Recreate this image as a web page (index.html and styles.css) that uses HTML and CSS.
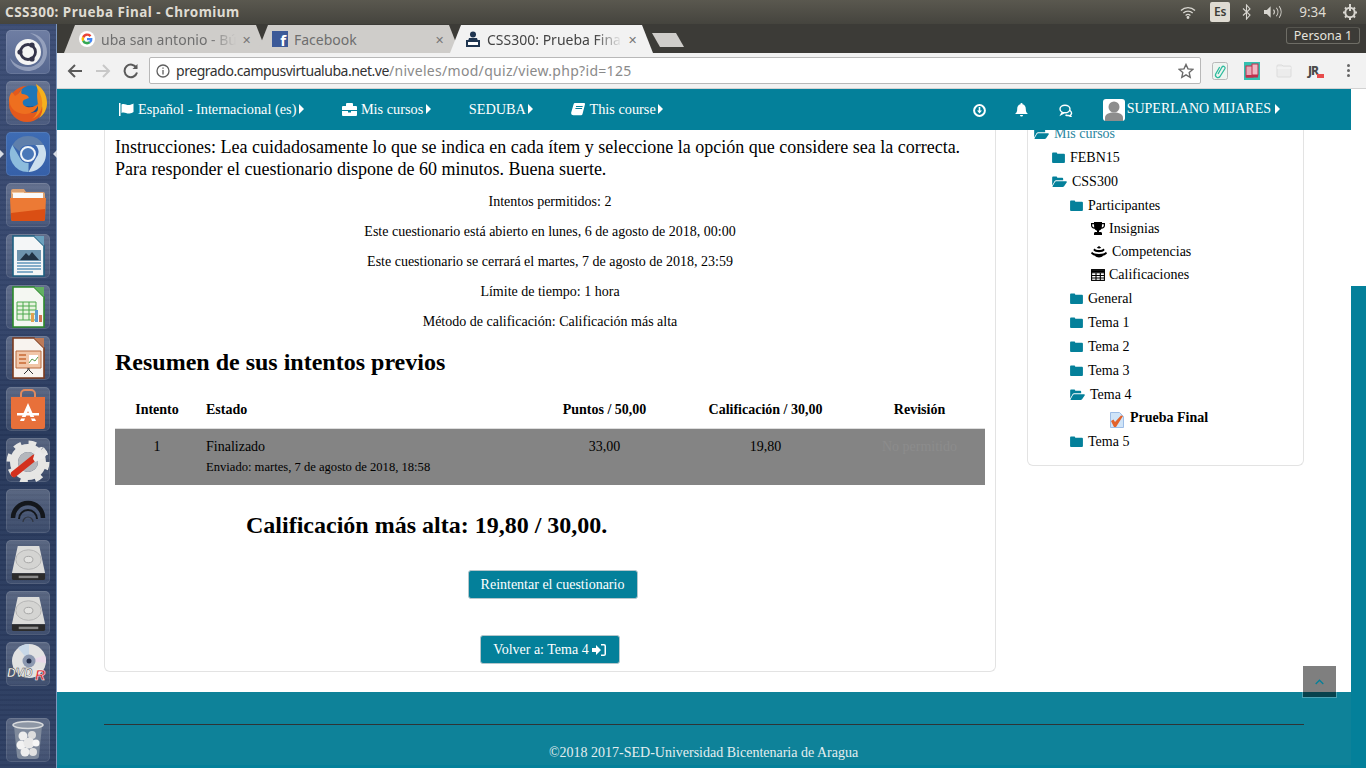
FILE: index.html
```html
<!DOCTYPE html>
<html lang="es">
<head>
<meta charset="utf-8">
<title>CSS300: Prueba Final</title>
<link rel="stylesheet" href="styles.css">
</head>
<body>
<svg class="defs" width="0" height="0" aria-hidden="true">
  <symbol id="folder" viewBox="0 0 14 12"><path d="M1 .5h3.600a1 1 0 0 1 1 1v.4H13a1 1 0 0 1 1 1V11a1 1 0 0 1-1 1H1a1 1 0 0 1-1-1V1.500a1 1 0 0 1 1-1z"/></symbol>
  <symbol id="folder-open" viewBox="0 0 16 12"><path d="M0 10.300V1.500a1 1 0 0 1 1-1h3.500a1 1 0 0 1 1 1v.4H11a1 1 0 0 1 1 1V4.600H4.300a2 2 0 0 0-1.600.9z"/><path d="M4.400 5.600H15a1 1 0 0 1 .8 1.500L13 11.200a2 2 0 0 1-1.600.8H1a.6.6 0 0 1-.4-1L3.200 6.200a1.600 1.600 0 0 1 1.200-.6z"/></symbol>
  <symbol id="disk" viewBox="0 0 44 44"><path d="M11 5h22l6 28H5z" fill="#dcdcda"/><path d="M5 33h34v5a2 2 0 0 1-2 2H7a2 2 0 0 1-2-2z" fill="#2b2b2b"/><path d="M12 35.500h20v2.500H12z" fill="#8a8a8a"/><ellipse cx="22" cy="19" rx="13" ry="10" fill="#d4d4d2" stroke="#b4b4b4"/><ellipse cx="22" cy="19" rx="4.500" ry="3.300" fill="#e2e2e0" stroke="#a4a4a4"/></symbol>
  <symbol id="caret" viewBox="0 0 5 10"><path d="M0 0l5 5-5 5z"/></symbol>
</svg>
<div class="desktop">
  <header class="panel">
    <span class="win-title">CSS300: Prueba Final - Chromium</span>
    <div class="tray">
      <svg class="tray-wifi" width="18" height="13" viewBox="0 0 16 13" fill="none" stroke="#d8d6d0" stroke-width="1.300"><path d="M1 4.500a10 10 0 0 1 14 0M3.300 7a7 7 0 0 1 9.400 0M5.600 9.400a3.600 3.600 0 0 1 4.800 0"/><circle cx="8" cy="11.500" r=".8" fill="#d8d6d0"/></svg>
      <span class="tray-es">Es</span>
      <svg class="tray-bt" width="9" height="16" viewBox="0 0 9 16" fill="none" stroke="#d8d6d0" stroke-width="1.100"><path d="M1 4.500l7 6.500-3.500 4V1L8 5 1 11.500"/></svg>
      <svg class="tray-vol" width="19" height="14" viewBox="0 0 20 14"><path d="M0 5h3l4-4v12l-4-4H0z" fill="#d8d6d0"/><path d="M10 4.500a4 4 0 0 1 0 5M13 2.500a7 7 0 0 1 0 9M16 1a10 10 0 0 1 0 12" fill="none" stroke="#d8d6d0" stroke-width="1.100"/></svg>
      <span class="tray-time">9:34</span>
      <svg width="16" height="16" viewBox="0 0 16 16" fill="none" stroke="#d8d6d0" stroke-width="2"><circle cx="8" cy="8.500" r="4.700"/><path d="M8 0v7M8 13v3M1 8.500h2M13 8.500h2M3 3.500l1.500 1.500M13 3.500L11.500 5M3 13.500L4.500 12M13 13.500L11.500 12"/></svg>
    </div>
  </header>
  <div class="below-panel">
    <nav class="launcher">
      <div class="tile tile-ubuntu">
        <svg width="44" height="44" viewBox="0 0 44 44"><path d="M24 3c10 1 17 9 17 19s-8 19-19 19C14 41 6 36 4 28c4 6 10 9 18 9 9 0 15-7 15-15S33 7 24 3z" fill="#a8b2cb" opacity=".7"/><circle cx="22" cy="22" r="13" fill="#f5f5f5"/><circle cx="22" cy="22" r="7.500" fill="none" stroke="#34344a" stroke-width="2.800"/><circle cx="14" cy="22" r="2.600" fill="#34344a"/><circle cx="26" cy="15" r="2.600" fill="#34344a"/><circle cx="26" cy="29" r="2.600" fill="#34344a"/></svg>
      </div>
      <div class="tile">
        <svg width="40" height="40" viewBox="0 0 40 40"><circle cx="19" cy="21" r="18" fill="#e4591c"/><circle cx="23" cy="16" r="13.500" fill="#1f76b8"/><path d="M23 16m-13 4a13.500 13.500 0 0 0 26 0c-5 4-21 5-26 0z" fill="#164f92"/><path d="M28 1c7 4 11 11 11 19 0 6-3 12-8 15 3-4 4-8 3-12-1-7-4-14-6-22z" fill="#f6b01c"/><path d="M30 6c3 6 5 12 4 18-1 5-5 10-10 12 4-3 6-8 6-12 0-6-2-12 0-18z" fill="#f08a1c"/><path d="M4 9l3 4 3-2 4-5c-1 3-1 4 0 5 3 0 6 1 7 4-2 1-5 1-6 3-1 3 1 5 4 6 5 1 9-1 12-4-2 7-7 11-14 11-8 0-15-5-16-14 0-3 1-6 3-8z" fill="#ee6f1f"/></svg>
      </div>
      <div class="tile tile-active">
        <span class="arrow-left"></span><span class="arrow-right"></span>
        <svg width="38" height="38" viewBox="0 0 38 38"><path d="M19 1a18 18 0 0 1 15.600 9H19a9 9 0 0 0-8.600 6.300L3.400 10A18 18 0 0 1 19 1z" fill="#5f7fab"/><path d="M34.600 10A18 18 0 0 1 19.500 37l7.300-13.500a9 9 0 0 0-.6-13.500z" fill="#cbdfee"/><path d="M3.400 10l7.800 13.500a9 9 0 0 0 8.400 4.500l-.1 9A18 18 0 0 1 3.400 10z" fill="#8dbcdd"/><circle cx="19" cy="19" r="7" fill="#4a78b8" stroke="#eef4f9" stroke-width="2"/></svg>
      </div>
      <div class="tile">
        <svg width="40" height="36" viewBox="0 0 40 36"><path d="M3 4a2 2 0 0 1 2-2h11l2 3h17a2 2 0 0 1 2 2v4H3z" fill="#dba070"/><path d="M4 5h12v2H4z" fill="#f4c9a0"/><path d="M5 6h30v6H5z" fill="#fafafa"/><path d="M2 11h36l-1 21a2 2 0 0 1-2 2H5a2 2 0 0 1-2-2z" fill="#ec7a35"/><path d="M3 26l34-4v10a2 2 0 0 1-2 2H5a2 2 0 0 1-2-2z" fill="#da4f14"/></svg>
      </div>
      <div class="tile">
        <svg width="34" height="42" viewBox="0 0 34 42"><path d="M2 1h21l10 10v30H2z" fill="#f4f6f7" stroke="#1d5f80" stroke-width="1.600"/><path d="M23 1h10v10z" fill="#6aa0bd"/><path d="M6 15h24v11H6z" fill="#6d93ad"/><path d="M9 25l6-7 3 3 3-4 7 8z" fill="#234"/><path d="M6 28h24M6 31h24M6 34h24M6 37h16" stroke="#5f95ba" stroke-width="1.500"/></svg>
      </div>
      <div class="tile">
        <svg width="34" height="42" viewBox="0 0 34 42"><path d="M2 1h21l10 10v30H2z" fill="#f4f7f2" stroke="#2b8a2b" stroke-width="1.600"/><path d="M23 1h10v10z" fill="#62b062"/><path d="M6 16h19v18H6z" fill="#e8f3e0" stroke="#4aa84a"/><path d="M6 20h19M6 24h19M6 28h19M12 16v18M18 16v18" stroke="#4aa84a"/><path d="M20 27h3v9h-3z" fill="#e0a050"/><path d="M24 24h3v12h-3z" fill="#5a9ad0"/><path d="M28 29h3v7h-3z" fill="#d07050"/></svg>
      </div>
      <div class="tile">
        <svg width="34" height="42" viewBox="0 0 34 42"><path d="M2 1h21l10 10v30H2z" fill="#f8f3ef" stroke="#7c3a1d" stroke-width="1.600"/><path d="M23 1h10v10z" fill="#bd7a58"/><path d="M5 14h25v17H5z" fill="#f1c6a8" stroke="#b96a3f"/><path d="M8 18h7M8 22h7M8 26h7" stroke="#c76a33" stroke-width="1.500"/><path d="M18 18h9v9h-9z" fill="#fff"/><path d="M18 26l3-4 3 2 3-4" fill="none" stroke="#5a9a4a"/><path d="M17 31v2l-4 4M18 31v2l4 4" stroke="#333" fill="none"/></svg>
      </div>
      <div class="tile">
        <svg width="38" height="42" viewBox="0 0 38 42"><path d="M12 10V6a4 4 0 0 1 4-4h6a4 4 0 0 1 4 4v4" fill="none" stroke="#e28a5d" stroke-width="2"/><path d="M2 9h34v30a2 2 0 0 1-2 2H4a2 2 0 0 1-2-2z" fill="#e8703a"/><path d="M19 15l8 18h-4l-4-10-4 10h-4z" fill="#fff"/><path d="M8 25h22v2.500H8z" fill="#fff"/><path d="M8 29h22v1.500H8z" fill="#e8703a"/></svg>
      </div>
      <div class="tile">
        <svg width="44" height="44" viewBox="0 0 44 44"><circle cx="22" cy="24" r="14" fill="none" stroke="#e6e6e4" stroke-width="8"/><circle cx="22" cy="24" r="19" fill="none" stroke="#e6e6e4" stroke-width="5" stroke-dasharray="7.500 7.420"/><circle cx="22" cy="24" r="10" fill="#b4b7bc"/><path d="M8 36L28 20" stroke="#d3301e" stroke-width="6.500" stroke-linecap="round"/><path d="M27 21l2-7c1-3 4-5 8-5l-3 4 3 3 4-3c0 4-2 7-5 8l-7 3z" fill="#eaeaea"/></svg>
      </div>
      <div class="tile">
        <svg width="36" height="30" viewBox="0 0 36 30" fill="none" stroke="#14171c"><path d="M3 22a15 15 0 0 1 30 0" stroke-width="4.500"/><path d="M9 23a9 9 0 0 1 18 0" stroke-width="2"/><path d="M13 26a5 5 0 0 1 10 0" stroke-width="1.200" stroke="#303540"/></svg>
      </div>
      <div class="tile"><svg width="43" height="43"><use href="#disk"/></svg></div>
      <div class="tile"><svg width="43" height="43"><use href="#disk"/></svg></div>
      <div class="tile">
        <svg width="44" height="44" viewBox="0 0 44 44"><circle cx="23" cy="19" r="17" fill="#e2e2e2"/><path d="M23 19L12 6a17 17 0 0 1 11-4z" fill="#c8d8e8"/><path d="M23 19l16-6a17 17 0 0 1 1 8z" fill="#e8d8e8"/><circle cx="23" cy="19" r="6.500" fill="#8c98b0"/><circle cx="23" cy="19" r="2.500" fill="#25304c"/><text x="1" y="35" class="dvd">DVD</text><text x="29" y="38" class="dvd-r">R</text></svg>
      </div>
      <div class="tile tile-trash">
        <svg width="34" height="42" viewBox="0 0 34 42"><path d="M3 7l3 30a4 3 0 0 0 4 3h14a4 3 0 0 0 4-3l3-30z" fill="#7f8a9c"/><ellipse cx="17" cy="6" rx="15" ry="3.500" fill="#8e97a5" stroke="#dadcde" stroke-width="1.500"/><circle cx="12" cy="17" r="4.500" fill="#eee"/><circle cx="21" cy="16" r="4" fill="#ddd"/><circle cx="10" cy="26" r="4.500" fill="#f2f2f2"/><circle cx="18" cy="24" r="5.500" fill="#e8e8e8"/><circle cx="25" cy="24" r="3.500" fill="#f6f6f6"/><circle cx="14" cy="33" r="4.500" fill="#eee"/><circle cx="22" cy="33" r="4" fill="#e2e2e2"/></svg>
      </div>
    </nav>
    <div class="browser">
      <div class="tabstrip">
        <div class="tab">
          <svg class="fav" width="16" height="16" viewBox="0 0 16 16"><circle cx="8" cy="8" r="8" fill="#fff"/><path d="M12.400 4.500A5.500 5.500 0 0 0 3.100 5.500L5.200 7.200A3 3 0 0 1 10.500 6z" fill="#ea4335"/><path d="M3.100 5.500a5.500 5.500 0 0 0 0 5l2.100-1.600a3 3 0 0 1 0-1.700z" fill="#fbbc05"/><path d="M3.100 10.500a5.500 5.500 0 0 0 8.600 1.400l-2-1.600A3 3 0 0 1 5.200 8.900z" fill="#34a853"/><path d="M8 7v2.200h3a3 3 0 0 1-1.300 1.100l2 1.600A5.500 5.500 0 0 0 13.400 7z" fill="#4285f4"/></svg>
          <span class="tab-title">uba san antonio - Bú</span><span class="tab-x">✕</span>
        </div>
        <div class="tab">
          <span class="fav fav-fb">f</span>
          <span class="tab-title tab-plain">Facebook</span><span class="tab-x">✕</span>
        </div>
        <div class="tab tab-active">
          <svg class="fav" width="16" height="16" viewBox="0 0 16 16" fill="#1f3550"><circle cx="8" cy="3.500" r="3"/><path d="M4 7h8l1 3H3z"/><path d="M1 9h14v7H1z"/><path d="M3 11h10v3H3z" fill="#fff"/></svg>
          <span class="tab-title">CSS300: Prueba Fina</span><span class="tab-x">✕</span>
        </div>
        <div class="newtab"></div>
        <span class="persona">Persona 1</span>
      </div>
      <div class="toolbar">
        <svg class="tool" width="16" height="16" viewBox="0 0 16 16" fill="none" stroke="#5a5a5a" stroke-width="2"><path d="M15 8H2M8 2L2 8l6 6"/></svg>
        <svg class="tool" width="16" height="16" viewBox="0 0 16 16" fill="none" stroke="#c8c8c8" stroke-width="2"><path d="M1 8h13M8 2l6 6-6 6"/></svg>
        <svg class="tool" width="16" height="16" viewBox="0 0 16 16" fill="none" stroke="#5a5a5a" stroke-width="2"><path d="M13.500 5A6.300 6.300 0 1 0 14 9.500"/><path d="M14.500 1v5h-5" fill="#5a5a5a" stroke="none"/></svg>
        <div class="omnibox">
          <svg width="14" height="14" viewBox="0 0 14 14" fill="none" stroke="#5f5f5f" stroke-width="1.300"><circle cx="7" cy="7" r="6"/><path d="M7 6v4.500M7 3.400v1.400"/></svg>
          <span class="url"><span class="url-host">pregrado.campusvirtualuba.net.ve</span>/niveles/mod/quiz/view.php?id=125</span>
          <svg class="star" width="16" height="16" viewBox="0 0 16 16" fill="none" stroke="#6a6a6a" stroke-width="1.400"><path d="M8 1.500l2 4.400 4.800.5-3.600 3.200 1 4.700L8 11.900l-4.200 2.400 1-4.700L1.200 6.400 6 5.900z"/></svg>
        </div>
        <div class="exts">
          <svg width="16" height="18" viewBox="0 0 16 18"><rect x=".5" y=".5" width="15" height="17" rx="2" fill="#eef4f0" stroke="#b9b9b9"/><path d="M6 12l4-7a1.700 1.700 0 0 1 3 1.500l-5 8a2.500 2.500 0 0 1-4.300-2.500l4-7" fill="none" stroke="#2dbb9d" stroke-width="1.300"/></svg>
          <svg width="16" height="18" viewBox="0 0 16 18"><rect width="16" height="18" fill="#34c0b0"/><rect x="2" y="4" width="7" height="11" fill="#e8a9b8" stroke="#c0304c"/><rect x="8" y="2" width="6" height="11" fill="#f0b8c4" stroke="#c0304c"/><rect x="2" y="13" width="12" height="2.500" fill="#c0304c"/></svg>
          <svg width="16" height="14" viewBox="0 0 16 14"><path d="M1 2a1 1 0 0 1 1-1h4l1 1h7a1 1 0 0 1 1 1v9a1 1 0 0 1-1 1H2a1 1 0 0 1-1-1z" fill="#ececec" stroke="#dcdcdc"/><path d="M1 4h14" stroke="#f8f8f8"/></svg>
          <span class="ext-jr">JR<i class="ext-jr-badge"></i></span>
          <span class="dots"><i></i><i></i><i></i></span>
        </div>
      </div>
      <div class="viewport">
        <div class="page-col">
          <div class="topnav">
            <div class="nav-left">
              <a class="nav-item"><svg class="ico" width="15" height="13" viewBox="0 0 15 13" fill="#fff"><path d="M0 0h1.500v13H0z"/><path d="M2.500 1.500c3-1.500 5 1 8 .5 1.500-.2 3-1 4-1.500V9c-1 .6-2.500 1.300-4 1.500-3 .5-5-2-8-.5z"/></svg>Español - Internacional (es)<svg class="caret"><use href="#caret"/></svg></a>
              <a class="nav-item"><svg class="ico" width="15" height="13" viewBox="0 0 15 13" fill="#fff"><path d="M5 1.500h5V3H5zM4 3V1a1 1 0 0 1 1-1h5a1 1 0 0 1 1 1v2h3a1 1 0 0 1 1 1v3H0V4a1 1 0 0 1 1-1z"/><path d="M0 8h6v1.500h3V8h6v4a1 1 0 0 1-1 1H1a1 1 0 0 1-1-1z"/></svg>Mis cursos<svg class="caret"><use href="#caret"/></svg></a>
              <a class="nav-item">SEDUBA<svg class="caret"><use href="#caret"/></svg></a>
              <a class="nav-item"><svg class="ico" width="14" height="13" viewBox="0 0 14 13" fill="#fff"><path d="M4 0h9a1 1 0 0 1 1 1.200L11.500 11a1.600 1.600 0 0 1-1.500 1.200H2.500A2.300 2.300 0 0 1 .2 9.500L2.600 1.200A1.700 1.700 0 0 1 4 0zM5 3v1h6.500l.3-1zM4.400 5v1h6.500l.3-1z" fill-rule="evenodd"/></svg>This course<svg class="caret"><use href="#caret"/></svg></a>
            </div>
            <div class="nav-right">
              <svg width="13" height="13" viewBox="0 0 13 13" fill="none" stroke="#fff" stroke-width="2"><circle cx="6.500" cy="6.500" r="5.400"/><path d="M6.500 3v5" stroke-width="1.600"/><path d="M4 6.500h5L6.500 9.500z" fill="#fff" stroke="none"/></svg>
              <svg class="nav-bell" width="13" height="14" viewBox="0 0 13 14" fill="#fff"><path d="M6.500 0a1 1 0 0 1 1 1.200C9.800 1.700 10.800 3.500 10.800 6c0 3 1 3.800 2.200 5H0c1.200-1.200 2.200-2 2.200-5 0-2.500 1-4.300 3.300-4.800a1 1 0 0 1 1-1.200zM5 12h3a1.500 1.500 0 0 1-3 0z"/></svg>
              <svg width="14" height="13" viewBox="0 0 14 13" fill="none" stroke="#fff" stroke-width="1.400"><ellipse cx="6" cy="5" rx="5" ry="3.800"/><path d="M3 8.500L2 10.500l3-1.600M11 6.500c2 1.500 2 3.500.5 4.500l.5 1.500-2.500-1c-1 .1-2 0-3-.5"/></svg>
              <a class="nav-user">
                <svg class="avatar" width="22" height="22" viewBox="0 0 22 22"><rect width="22" height="22" rx="3" fill="#fff"/><circle cx="11" cy="8" r="5.500" fill="#8d8d8d"/><path d="M2 22v-3c0-4 4-5.500 9-5.500s9 1.500 9 5.500v3z" fill="#8d8d8d"/></svg>SUPERLANO MIJARES<svg class="caret"><use href="#caret"/></svg>
              </a>
            </div>
          </div>
          <main class="content">
            <section class="card card-main">
              <p class="lead">Instrucciones: Lea cuidadosamente lo que se indica en cada ítem y seleccione la opción que considere sea la correcta. Para responder el cuestionario dispone de 60 minutos. Buena suerte.</p>
              <p class="info">Intentos permitidos: 2</p>
              <p class="info">Este cuestionario está abierto en lunes, 6 de agosto de 2018, 00:00</p>
              <p class="info">Este cuestionario se cerrará el martes, 7 de agosto de 2018, 23:59</p>
              <p class="info">Límite de tiempo: 1 hora</p>
              <p class="info">Método de calificación: Calificación más alta</p>
              <h2 class="summary-title">Resumen de sus intentos previos</h2>
              <table class="attempts">
                <colgroup><col class="c1"><col class="c2"><col class="c3"><col class="c4"><col class="c5"></colgroup>
                <thead><tr><th>Intento</th><th class="left">Estado</th><th>Puntos / 50,00</th><th>Calificación / 30,00</th><th>Revisión</th></tr></thead>
                <tbody><tr>
                  <td>1</td>
                  <td class="left">Finalizado<div class="sub">Enviado: martes, 7 de agosto de 2018, 18:58</div></td>
                  <td>33,00</td><td>19,80</td><td class="muted">No permitido</td>
                </tr></tbody>
              </table>
              <h3 class="grade">Calificación más alta: 19,80 / 30,00.</h3>
              <div class="actions">
                <a class="btn btn-retry">Reintentar el cuestionario</a>
                <a class="btn btn-back">Volver a: Tema 4 <svg width="14" height="12" viewBox="0 0 14 12" fill="#fff"><path d="M0 4h4V1l5 5-5 5V8H0z"/><path d="M9 0h3a2 2 0 0 1 2 2v8a2 2 0 0 1-2 2H9v-1.500h3a.5.5 0 0 0 .5-.5V2a.5.5 0 0 0-.5-.5H9z"/></svg></a>
              </div>
            </section>
            <aside class="card card-side">
              <ul class="tree">
                <li class="row l0 link"><svg class="fo"><use href="#folder-open"/></svg>Mis cursos</li>
                <li class="row l1"><svg class="fc"><use href="#folder"/></svg>FEBN15</li>
                <li class="row l1"><svg class="fo"><use href="#folder-open"/></svg>CSS300</li>
                <li class="row l2"><svg class="fc"><use href="#folder"/></svg>Participantes</li>
                <li class="row leaf l3"><svg class="li" width="14" height="13" viewBox="0 0 14 13" fill="#000"><path d="M3 0h8v1h3v2.500c0 2-1.500 3-3.500 3.300A4 4 0 0 1 8 8.700V10h1.500c1 0 1.500.7 1.500 1.500V13H3v-1.500C3 10.700 3.500 10 4.500 10H6V8.700A4 4 0 0 1 3.500 6.800C1.500 6.500 0 5.500 0 3.500V1h3zM1.200 2.200v1.300c0 1 .8 1.700 2 2L3 2.200zM12.800 2.200H11l-.2 3.300c1.200-.3 2-1 2-2z" fill-rule="evenodd"/></svg>Insignias</li>
                <li class="row leaf l3"><svg class="li li-wide" width="16" height="12" viewBox="0 0 16 12" fill="#000"><path d="M8 0l2.200 1.800c-1.300.9-3.100.9-4.400 0z"/><path d="M3.500 2.600C5 4.600 11 4.600 12.500 2.600l1.200 1.400C12 7 4 7 2.300 4z"/><path d="M1 5.800c2 3 12 3 14 0l1 1.700c-1 1.200-3 2-4 2.300C10.500 12 5.500 12 4 9.800 3 9.500 1 8.700 0 7.500z"/></svg>Competencias</li>
                <li class="row leaf l3"><svg class="li" width="14" height="12" viewBox="0 0 14 12" fill="none" stroke="#000" stroke-width="1.100"><rect x=".6" y=".6" width="12.800" height="10.800"/><path d="M.6 3.800h12.800M.6 6.500h12.800M.6 9h12.800M5 3.800V11.400M9.300 3.800V11.400"/><path d="M.6 2.200h12.800" stroke-width="2.200"/></svg>Calificaciones</li>
                <li class="row l2"><svg class="fc"><use href="#folder"/></svg>General</li>
                <li class="row l2"><svg class="fc"><use href="#folder"/></svg>Tema 1</li>
                <li class="row l2"><svg class="fc"><use href="#folder"/></svg>Tema 2</li>
                <li class="row l2"><svg class="fc"><use href="#folder"/></svg>Tema 3</li>
                <li class="row l2"><svg class="fo"><use href="#folder-open"/></svg>Tema 4</li>
                <li class="row leaf l4 current"><svg class="quiz" width="16" height="16" viewBox="0 0 16 16"><path d="M1.500 .5h9l4 4v11h-13z" fill="#cfe4f8" stroke="#9dbde6"/><path d="M2 9l2.500-1.500L6 10 12 3.500l2 .5-7 11H5z" fill="#e2622b"/></svg>Prueba Final</li>
                <li class="row l2"><svg class="fc"><use href="#folder"/></svg>Tema 5</li>
              </ul>
            </aside>
          </main>
          <footer class="footer">
            <hr class="footer-rule">
            <p class="copy">©2018 2017-SED-Universidad Bicentenaria de Aragua</p>
          </footer>
          <a class="to-top"><svg width="9" height="6" viewBox="0 0 9 6" fill="none" stroke="#04809a" stroke-width="1.300"><path d="M.7 5l3.800-3.800L8.300 5"/></svg></a>
        </div>
        <div class="scroll-strip"></div>
      </div>
    </div>
  </div>
</div>
</body>
</html>
```
FILE: styles.css
```css
* { box-sizing: border-box; }
html, body { margin: 0; padding: 0; height: 100%; overflow: hidden; }
body { font-family: "Liberation Serif", "Times New Roman", serif; font-size: 14px; color: #000; }
.defs { display: block; height: 0; }
.desktop { width: 1366px; height: 768px; display: flex; flex-direction: column; }

/* Ubuntu panel */
.panel { height: 24px; flex: none; display: flex; align-items: center; justify-content: space-between; padding: 0 8px 0 5px;
  background: linear-gradient(#5a584f, #45443e); font-family: "Noto Sans", sans-serif; }
.win-title { color: #dfdbd2; font-size: 13.500px; font-weight: 700; letter-spacing: .48px; }
.tray { display: flex; align-items: center; }
.tray-wifi { margin-right: 13px; }
.tray-es { width: 20px; height: 20px; margin-right: 12px; background: #dfdbd2; border-radius: 2px; color: #3c3b37; font-size: 12px; font-weight: 600; text-align: center; line-height: 20px; }
.tray-bt { margin-right: 13px; }
.tray-vol { margin-right: 16px; }
.tray-time { color: #dfdbd2; font-size: 13.500px; margin-right: 16px; }

.below-panel { flex: 1; display: flex; min-height: 0; }

/* Launcher */
.launcher { width: 57px; flex: none; display: flex; flex-direction: column; gap: 7px; padding: 6px 0 0 6px;
  background: repeating-linear-gradient(rgba(0,0,0,.03) 0 2px, rgba(255,255,255,.02) 2px 5px), linear-gradient(#3c4d75 0, #33446a 40%, #27385b 55%, #2a3b5e 72%, #2e3f63 100%); border-right: 1px solid #7d97bd; }
.tile { position: relative; width: 44px; height: 44px; flex: none; border-radius: 5px; display: flex; align-items: center; justify-content: center;
  background: linear-gradient(rgba(255,255,255,.22), rgba(255,255,255,.08)); box-shadow: inset 0 0 0 1px rgba(255,255,255,.1); }
.tile-ubuntu { background: linear-gradient(#6f7ea3, #56678f); }
.tile-active { background: linear-gradient(#3e6cb4, #3660a8); }
.tile-trash { margin-top: 25px; }
.arrow-left, .arrow-right { position: absolute; top: 18px; width: 0; height: 0; border-top: 4px solid transparent; border-bottom: 4px solid transparent; }
.arrow-left { left: -6px; border-left: 4px solid #d8dce4; }
.arrow-right { right: -7px; border-right: 4px solid #d8dce4; }
.dvd { font: italic 700 12px "Liberation Sans", sans-serif; fill: #fff; stroke: #444; stroke-width: .5px; }
.dvd-r { font: italic 700 14px "Liberation Sans", sans-serif; fill: #d8222c; stroke: #fff; stroke-width: .5px; }

/* Browser chrome */
.browser { flex: 1; min-width: 0; display: flex; flex-direction: column; }
.tabstrip { position: relative; height: 29px; flex: none; display: flex; align-items: flex-end; padding-left: 7px; background: #3c3b37; font-family: "Noto Sans", sans-serif; }
.tab { width: 203px; height: 28px; flex: none; margin-right: -10px; display: flex; align-items: center; padding: 0 16px 0 15px; background: #cfcdca;
  clip-path: polygon(0 100%, 11px 0, 192px 0, 203px 100%); }
.tab-active { background: #f2f2f2; z-index: 1; }
.fav { flex: none; margin-right: 6px; }
.fav-fb { width: 16px; height: 16px; background: #3b5998; color: #fff; font-weight: 700; font-size: 15px; line-height: 18px; text-align: right; padding-right: 2px; overflow: hidden; }
.tab-title { flex: 1; min-width: 0; white-space: nowrap; font-size: 14px; color: #6e6e6e; -webkit-mask-image: linear-gradient(90deg, #000 78%, transparent 98%); mask-image: linear-gradient(90deg, #000 78%, transparent 98%); }
.tab-plain { -webkit-mask-image: none; mask-image: none; }
.tab-active .tab-title { color: #444; }
.tab-x { flex: none; margin-left: 3px; font-size: 11px; color: #777; }
.newtab { width: 32px; height: 14px; margin: 0 0 6px 9px; background: #cfcdca; clip-path: polygon(0 0, 24px 0, 32px 100%, 8px 100%); }
.persona { position: absolute; right: 6px; top: 3px; width: 74px; height: 17px; border: 1px solid #6e6d66; border-top-color: #55544e; border-radius: 3px; color: #e6e4de; font-size: 12.500px; line-height: 15px; text-align: center; }

.toolbar { height: 36px; flex: none; display: flex; align-items: center; padding: 0 0 0 10px; background: #f2f2f2; border-bottom: 1px solid #d2d2d2; font-family: "Noto Sans", sans-serif; }
.tool { margin-right: 12px; flex: none; }
.omnibox { width: 1052px; height: 27px; margin-left: -2px; display: flex; align-items: center; padding: 0 6px 0 6px; background: #fff; border: 1px solid #b8b8b8; border-radius: 2px; }
.url { flex: 1; margin-left: 6px; font-size: 14px; color: #8a8a8a; white-space: nowrap; letter-spacing: .3px; }
.url-host { color: #333; letter-spacing: -.45px; }
.star { flex: none; }
.exts { display: flex; align-items: center; gap: 16px; margin-left: 11px; }
.ext-jr { position: relative; width: 16px; font-size: 12px; font-weight: 800; color: #4a4a4a; letter-spacing: -1px; }
.ext-jr-badge { position: absolute; right: 0; bottom: 1px; width: 7px; height: 4px; background: #e74c4c; }
.dots { display: flex; flex-direction: column; gap: 2px; margin-left: 7px; }
.dots i { width: 3px; height: 3px; border-radius: 50%; background: #666; }

/* Viewport */
.viewport { flex: 1; min-height: 0; display: flex; background: #fff; }
.page-col { position: relative; width: 1294px; flex: none; display: flex; flex-direction: column; overflow: hidden; }
.scroll-strip { flex: 1; margin-top: 197px; background: #04809a; }

.topnav { height: 41px; flex: none; display: flex; justify-content: space-between; align-items: center; padding: 1px 71px 0 62px; background: #04809a; color: #fff; }
.nav-left { display: flex; align-items: center; gap: 38px; font-size: 14.300px; margin-top: -2px; }
.nav-right { display: flex; align-items: center; gap: 30px; }
.nav-bell { margin-left: -1px; margin-right: 1px; }
.nav-item, .nav-user { display: flex; align-items: center; color: #fff; }
.ico { margin-right: 4px; flex: none; }
.caret { width: 5px; height: 10px; margin-left: 2.500px; fill: #fff; flex: none; }
.nav-user { margin-top: -2px; }
.avatar { margin-right: 2px; flex: none; margin-top: 2px; }
.nav-user .caret { margin-left: 4px; }

.content { flex: 1; min-height: 0; display: flex; align-items: flex-start; gap: 31px; padding-left: 47px; overflow: hidden; }
.card { background: #fff; border: 1px solid #e3e3e3; border-top: 0; border-radius: 0 0 6px 6px; }
.card-main { width: 892px; height: 542px; padding: 6px 10px 0; }
.card-side { width: 277px; height: 336px; }

.lead { margin: 0; font-size: 18px; line-height: 22px; }
.info { margin: 10px 0 0; line-height: 20px; text-align: center; }
.lead + .info { margin-top: 12px; }
.summary-title { margin: 16px 0 0; font-size: 24px; line-height: 28px; font-weight: 700; }

.attempts { width: 870px; margin-top: 17px; table-layout: fixed; border-collapse: collapse; }
.c1 { width: 84px; } .c2 { width: 333px; } .c3 { width: 145px; } .c4 { width: 177px; } .c5 { width: 131px; }
.attempts th { height: 35px; padding: 0; font-weight: 700; text-align: center; border-bottom: 1px solid #ddd; }
.attempts td { height: 57px; padding: 8px 0 0; vertical-align: top; text-align: center; background: #848484; line-height: 20px; }
.attempts .left { padding-left: 7px; text-align: left; }
.sub { font-size: 12.600px; line-height: 20px; }
.attempts .muted { color: #8c8c8c; }

.grade { margin: 26px 0 0 131px; font-size: 24px; line-height: 28px; font-weight: 700; }
.actions { display: flex; flex-direction: column; align-items: center; gap: 36px; margin-top: 31px; padding-right: 1px; }
.btn { display: flex; align-items: center; justify-content: center; gap: 3px; height: 29px; padding: 0 12px; background: #04809a; border: 1px solid #b5c6cb; border-radius: 3px; color: #fff; line-height: 20px; }
.btn-retry { width: 170px; margin-left: 6px; }
.btn-back { width: 140px; }

.tree { list-style: none; margin: 0; padding: 0; }
.row { display: flex; align-items: center; height: 24px; }
.row.leaf { height: 23px; padding-bottom: 2px; }
.l0 { padding-left: 6px; height: 8px; margin-bottom: 8px; }
.l1 { padding-left: 24px; }
.l2 { padding-left: 42px; }
.l3 { padding-left: 63px; }
.l4 { padding-left: 81px; font-weight: 700; }
.link { color: #2a86a0; }
.fc { width: 13px; height: 11px; margin-right: 5px; margin-bottom: 2px; fill: #04809a; flex: none; }
.fo { width: 15px; height: 11px; margin-right: 5px; margin-bottom: 2px; fill: #04809a; flex: none; }
.li { margin-right: 4px; flex: none; }
.li-wide { margin-right: 5px; }
.quiz { margin-right: 5px; flex: none; margin-top: 4px; margin-left: 0; }

.footer { height: 76px; flex: none; padding: 32px 47px 0; background: #0e8299; border-bottom: 3px solid #04809a; }
.footer-rule { width: 1200px; height: 1px; margin: 0; border: 0; background: #2f3436; }
.copy { margin: 20px 0 0; padding-right: 1px; text-align: center; color: #e4eef0; line-height: 16px; }

.to-top { position: absolute; right: 15px; top: 577px; width: 33px; height: 31px; display: flex; align-items: center; justify-content: center; background: rgba(0,0,0,.5); box-shadow: 0 0 0 1px rgba(255,255,255,.25); }
```
